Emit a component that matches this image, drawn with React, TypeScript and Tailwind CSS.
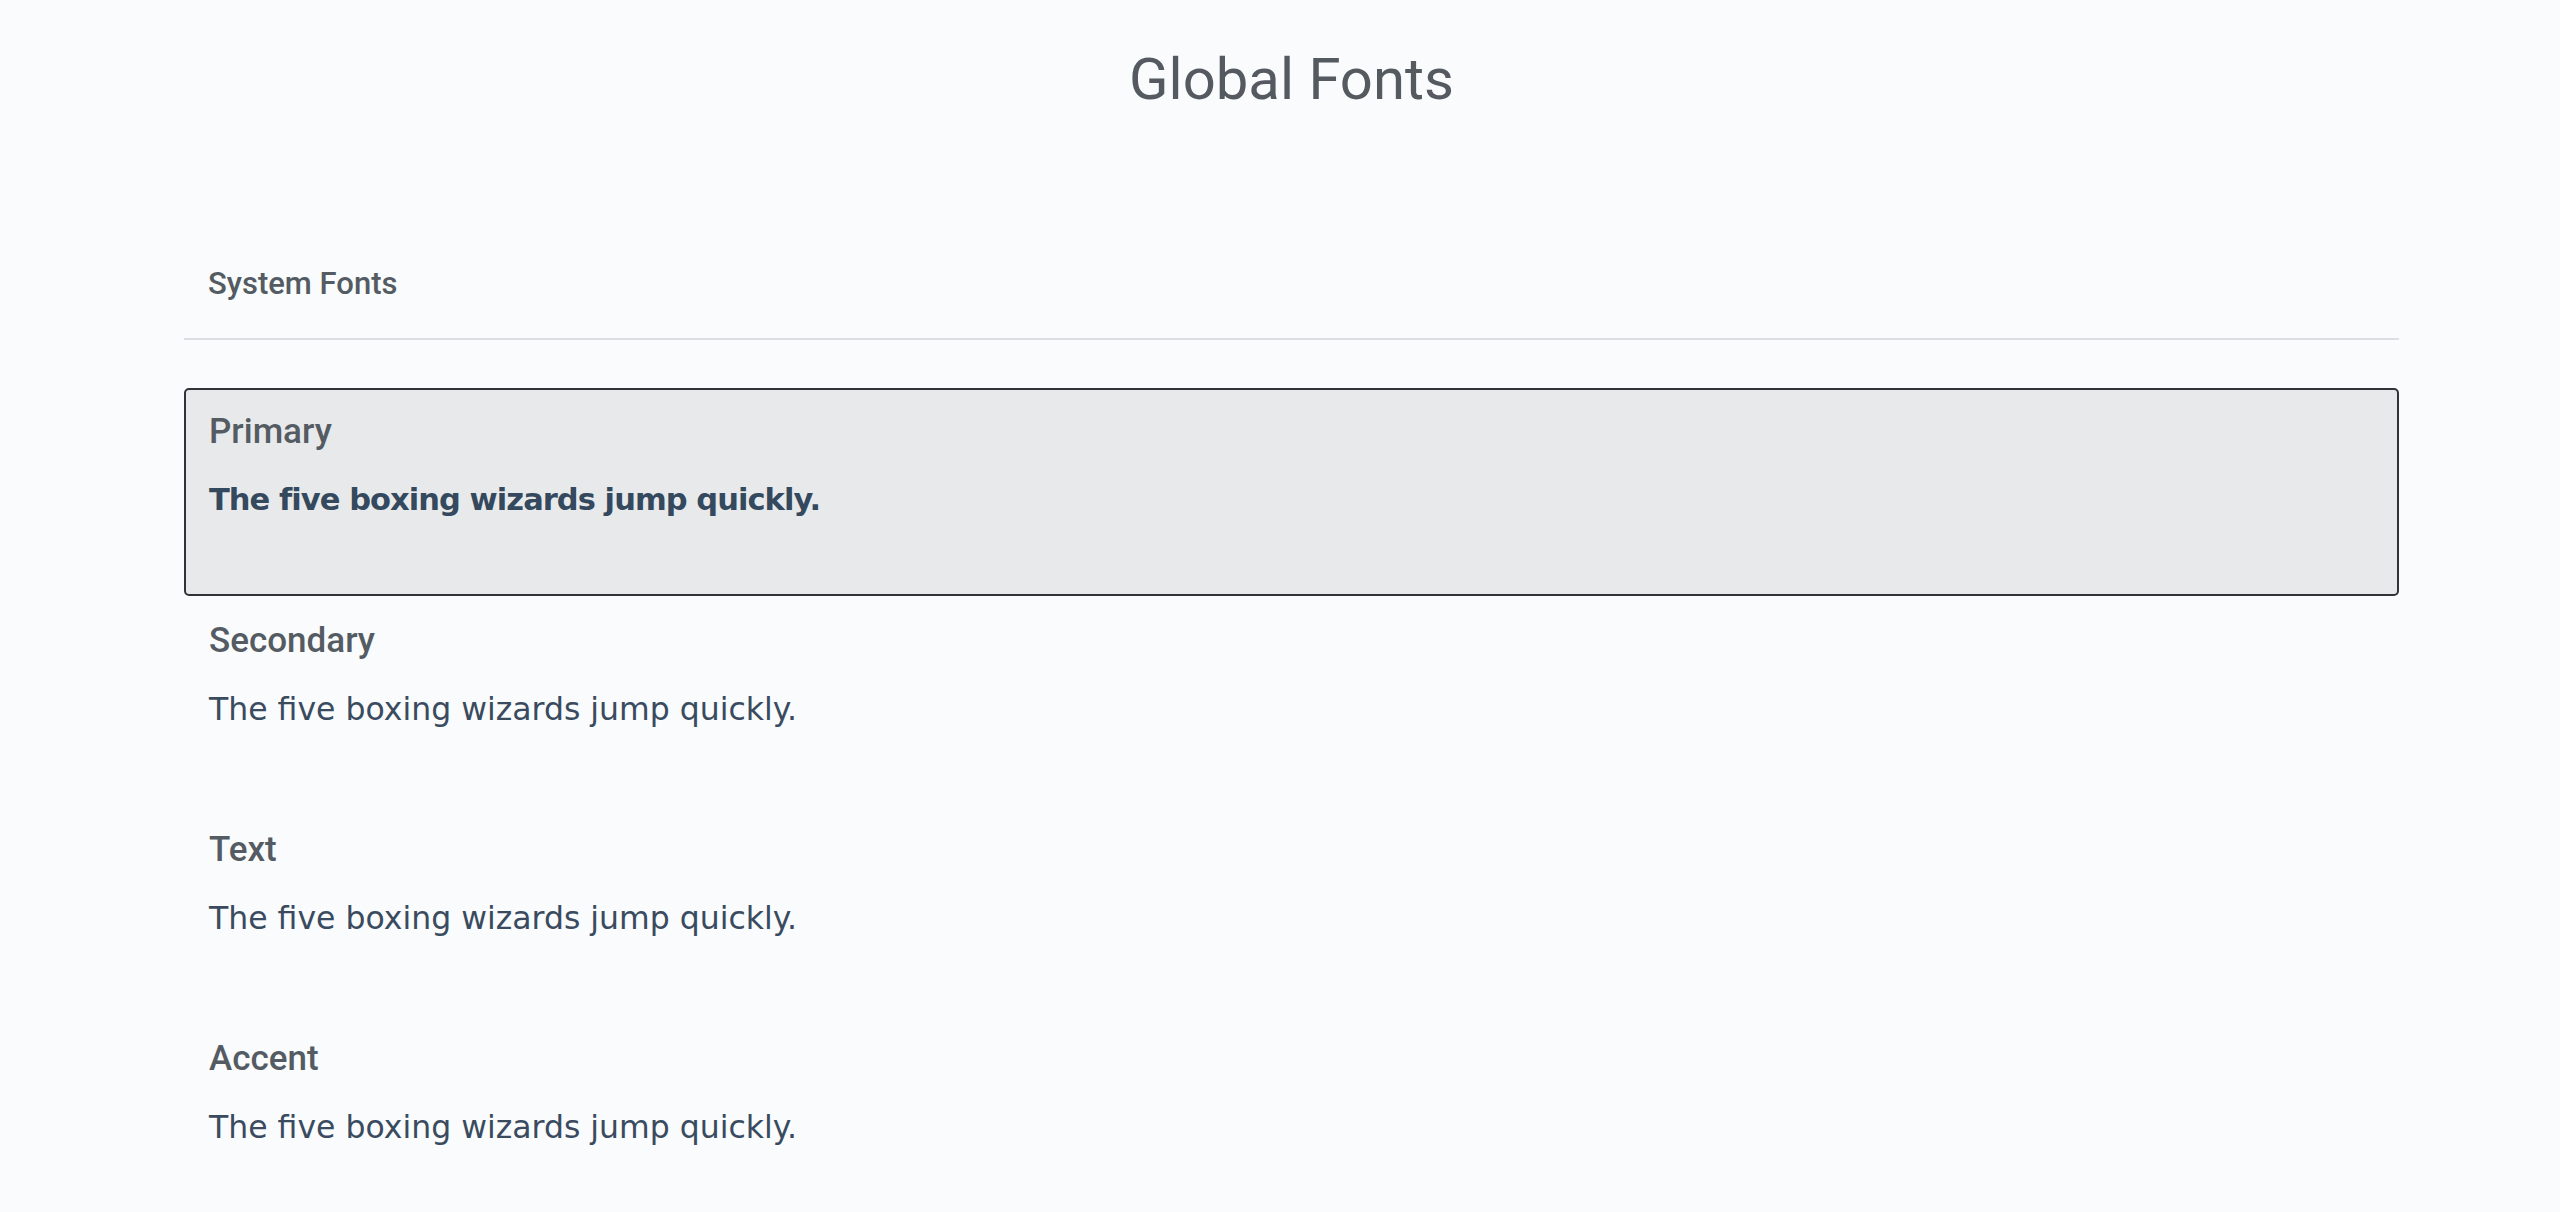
const fonts = [
	{ name: 'Primary', bold: true },
	{ name: 'Secondary', bold: false },
	{ name: 'Text', bold: false },
	{ name: 'Accent', bold: false },
]

const SAMPLE = 'The five boxing wizards jump quickly.'

function FontRow({ name, bold }: { name: string; bold: boolean }) {
	return (
		<div
			className={`h-[208px] rounded-[5px] border-2 px-[23px] pt-[22px] ${
				bold ? 'border-[#303437] bg-[#e8e9ea]' : 'border-transparent'
			}`}
		>
			<div className="text-[35px] leading-[40px] font-medium text-[#545b62]">{name}</div>
			<p
				className={`mt-[28px] leading-[40px] font-['DejaVu_Sans',sans-serif] ${
					bold
						? 'text-[30.5px] font-bold tracking-[-0.95px] text-[#34495e]'
						: 'text-[31.5px] font-normal text-[#3a4b5f]'
				}`}
			>
				{SAMPLE}
			</p>
		</div>
	)
}

export default function App() {
	return (
		<div className="min-h-screen bg-[#f9fbfd] font-['Roboto',sans-serif]">
			<div className="ml-[184px] mr-[161px]">
				{/* Page title */}
				<h1 className="pt-[44px] text-center text-[58px] leading-[70px] font-normal text-[#545a60]">
					Global Fonts
				</h1>

				{/* Section header */}
				<div className="mt-[152px] border-b-2 border-[#dcdee1] px-6 pb-[36px]">
					<h2 className="text-[31px] leading-[36px] font-medium text-[#545b62]">System Fonts</h2>
				</div>

				{/* Font list */}
				<div className="mt-[48px] flex flex-col gap-px">
					{fonts.map((f) => (
						<FontRow key={f.name} name={f.name} bold={f.bold} />
					))}
				</div>
			</div>
		</div>
	)
}
